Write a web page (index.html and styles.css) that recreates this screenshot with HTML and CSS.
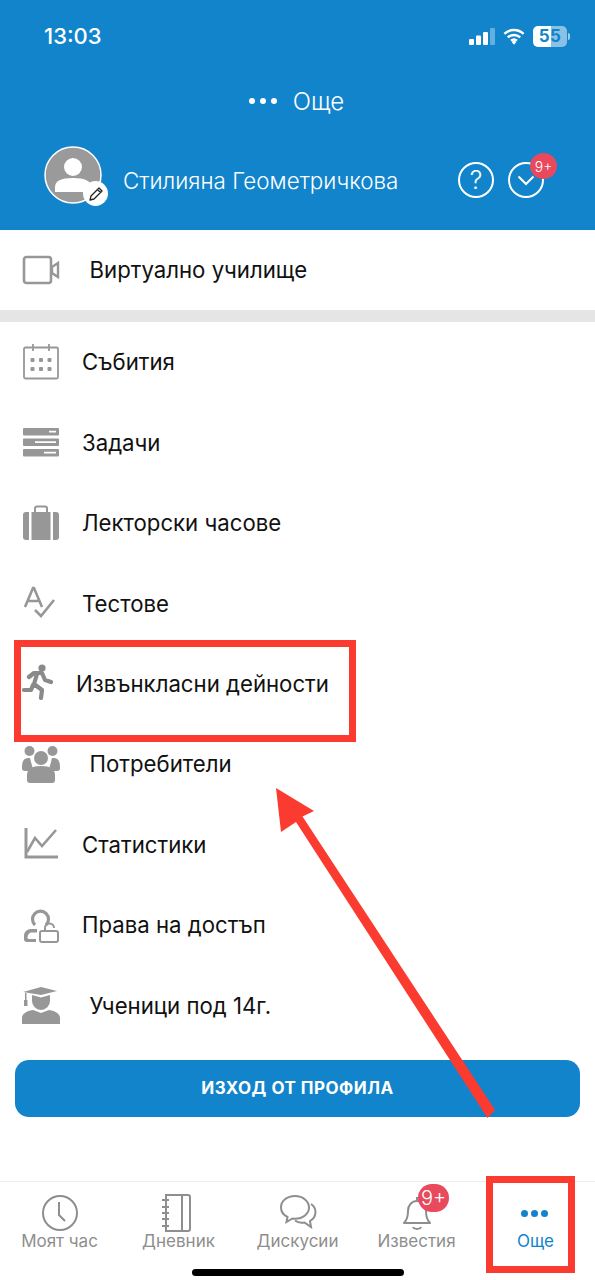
FILE: index.html
```html
<!DOCTYPE html>
<html lang="bg">
<head>
<meta charset="utf-8">
<title>Още</title>
<link rel="stylesheet" href="styles.css">
</head>
<body>
<div class="screen">
  <header class="header">
    <div class="status">
      <span class="time">13:03</span>
      <div class="status-icons">
        <svg class="signal" viewBox="0 0 26 17"><rect x="0" y="11" width="5" height="6" rx="1" fill="#fff"/><rect x="7" y="7.5" width="5" height="9.5" rx="1" fill="#fff"/><rect x="14" y="4" width="5" height="13" rx="1" fill="#fff"/><rect x="21" y="0" width="5" height="17" rx="1" fill="#fff" opacity=".35"/></svg>
        <svg class="wifi" viewBox="0 0 24 18"><path d="M1.5 6.2a15 15 0 0 1 21 0M5.2 10a10 10 0 0 1 13.6 0M8.7 13.6a5 5 0 0 1 6.6 0" fill="none" stroke="#fff" stroke-width="2.6"/><path d="M12 18l-2.6-3a3.6 3.6 0 0 1 5.2 0z" fill="#fff"/></svg>
        <div class="battery"><span class="battery-num">55</span></div>
        <span class="battery-tip"></span>
      </div>
    </div>
    <div class="title">
      <span class="title-dots"><i></i><i></i><i></i></span>
      <span class="title-text">Още</span>
    </div>
    <div class="profile">
      <div class="avatar">
        <svg class="avatar-img" viewBox="0 0 58 58"><circle cx="29" cy="29" r="28" fill="#9a9a9a" stroke="#fff" stroke-width="1.5"/><circle cx="29" cy="21" r="9" fill="#fff"/><path d="M11 46v-5c0-6 6-9 18-9s18 3 18 9v5z" fill="#fff"/></svg>
        <div class="pencil">
          <svg viewBox="0 0 16 16"><path d="M2 14l1-4 8-8 3 3-8 8z M9.5 3.5l3 3" fill="none" stroke="#222" stroke-width="1.3" stroke-linejoin="round"/></svg>
        </div>
      </div>
      <span class="name">Стилияна Геометричкова</span>
      <div class="profile-actions">
        <div class="round-icon">?</div>
        <div class="round-icon">
          <svg class="chevron" viewBox="0 0 18 11"><path d="M1.5 1.5L9 9l7.5-7.5" fill="none" stroke="#fff" stroke-width="2"/></svg>
          <span class="head-badge">9+</span>
        </div>
      </div>
    </div>
  </header>

  <main class="main">
    <div class="row row-first row-wide">
      <svg class="icon" viewBox="0 0 38 30"><rect x="2" y="2" width="27" height="26" rx="2.5" fill="none" stroke="#979797" stroke-width="2.6"/><path d="M30 12l6-4v14l-6-4z" fill="none" stroke="#979797" stroke-width="2.4"/></svg>
      <span>Виртуално училище</span>
    </div>
    <div class="band"></div>
    <div class="row">
      <svg class="icon" viewBox="0 0 38 38"><rect x="2" y="4.5" width="34" height="31" rx="1.5" fill="none" stroke="#979797" stroke-width="1.8"/><path d="M11 1v7M27 1v7" stroke="#979797" stroke-width="1.8"/><g fill="#979797"><rect x="8.500" y="15" width="4" height="4" rx="1"/><rect x="17" y="15" width="4" height="4" rx="1"/><rect x="25.500" y="15" width="4" height="4" rx="1"/><rect x="8.500" y="24" width="4" height="4" rx="1"/><rect x="17" y="24" width="4" height="4" rx="1"/><rect x="25.500" y="24" width="4" height="4" rx="1"/></g></svg>
      <span>Събития</span>
    </div>
    <div class="row">
      <svg class="icon" viewBox="0 0 38 30"><rect x="1" y="1" width="36" height="7.500" rx="1" fill="#979797"/><rect x="1" y="11.500" width="36" height="7.500" rx="1" fill="#979797"/><rect x="1" y="22" width="36" height="7.500" rx="1" fill="#979797"/><path d="M27 4.700h7M13 15.200h21M22 25.700h12" stroke="#fff" stroke-width="1.800"/></svg>
      <span>Задачи</span>
    </div>
    <div class="row">
      <svg class="icon" viewBox="0 0 38 36"><path d="M13 7V3.500a2 2 0 0 1 2-2h8a2 2 0 0 1 2 2V7" fill="none" stroke="#979797" stroke-width="2"/><path d="M4 7h3v28H4a3 3 0 0 1-3-3V10a3 3 0 0 1 3-3zM9.500 7h19v28h-19zM31 7h3a3 3 0 0 1 3 3v22a3 3 0 0 1-3 3h-3z" fill="#979797"/></svg>
      <span>Лекторски часове</span>
    </div>
    <div class="row">
      <svg class="icon" viewBox="0 0 38 34"><path d="M3 21L11 2h1l8 19M6 15h11" fill="none" stroke="#979797" stroke-width="2.6"/><path d="M13 24l6 6L32 14" fill="none" stroke="#979797" stroke-width="2.600"/></svg>
      <span>Тестове</span>
    </div>
    <div class="row row-narrow">
      <svg class="icon" viewBox="0 0 38 38"><circle cx="20" cy="4" r="3.600" fill="#8a8a8a"/><path d="M7 13l5-4h8l3 7 6 2M15 10l-3 10 8 6-1 8M11 21l-2 5H2" fill="none" stroke="#8a8a8a" stroke-width="4.200" stroke-linecap="round" stroke-linejoin="round"/></svg>
      <span>Извънкласни дейности</span>
    </div>
    <div class="row row-wide">
      <svg class="icon" viewBox="0 0 38 38"><g fill="#979797"><circle cx="7.500" cy="6" r="5"/><circle cx="30.500" cy="6" r="5"/><path d="M0 22c0-6 2-9 6-9h2l1 4 2 7v2H3a3 3 0 0 1-3-4zM38 22c0-6-2-9-6-9h-2l-1 4-2 7v2h8a3 3 0 0 0 3-4z"/><circle cx="19" cy="13" r="7"/><path d="M5 35v-5c0-6 5-9 14-9s14 3 14 9v5a3 3 0 0 1-3 3H8a3 3 0 0 1-3-3z"/></g></svg>
      <span>Потребители</span>
    </div>
    <div class="row">
      <svg class="icon" viewBox="0 0 38 34"><path d="M4 1v29h32" fill="none" stroke="#979797" stroke-width="3"/><path d="M5 25l8-14 7 8L34 3" fill="none" stroke="#979797" stroke-width="2.600"/></svg>
      <span>Статистики</span>
    </div>
    <div class="row">
      <svg class="icon" viewBox="0 0 38 38"><path d="M13 19a8 8 0 1 1 11 0" fill="none" stroke="#979797" stroke-width="3.200"/><path d="M15 23h-6c-4 0-7 3-7 7v3c0 2 1 3 3 3h9v-3H7c-1 0-1.500-.5-1.500-1.500 0-3 2-5 4-5H15z" fill="#979797"/><rect x="18" y="25" width="18" height="11" rx="2" fill="none" stroke="#979797" stroke-width="2"/><path d="M23 25v-3a4.500 4.500 0 0 1 9 0" fill="none" stroke="#979797" stroke-width="2"/></svg>
      <span>Права на достъп</span>
    </div>
    <div class="row row-wide">
      <svg class="icon" viewBox="0 0 38 38"><g fill="#979797"><path d="M1 6l18-5 16 4-16 4z"/><path d="M10 9l9 2.500L28 9v6a9 9 0 0 1-18 0z"/><rect x="3" y="7" width="1.500" height="9"/><rect x="2" y="14" width="3.500" height="6"/><path d="M0 38v-6c0-4 4-7 11-8l8 3 8-3c7 1 11 4 11 8v6z"/></g></svg>
      <span>Ученици под 14г.</span>
    </div>
    <div class="logout-wrap">
      <button class="logout">ИЗХОД ОТ ПРОФИЛА</button>
    </div>
  </main>

  <nav class="tabbar">
    <div class="tab">
      <svg class="tab-icon" viewBox="0 0 38 38"><circle cx="19" cy="19" r="17" fill="none" stroke="#8e8e8e" stroke-width="2"/><path d="M18 8v13l6 6" fill="none" stroke="#8e8e8e" stroke-width="2"/></svg>
      <span>Моят час</span>
    </div>
    <div class="tab">
      <svg class="tab-icon" viewBox="0 0 38 38"><path d="M6 1h22a2 2 0 0 1 2 2v32a2 2 0 0 1-2 2H6zM22 1v36" fill="none" stroke="#8e8e8e" stroke-width="2"/><path d="M2 6h7M2 13h7M2 19h7M2 25h7M2 32h7" stroke="#8e8e8e" stroke-width="2"/></svg>
      <span>Дневник</span>
    </div>
    <div class="tab">
      <svg class="tab-icon tab-wide" viewBox="0 0 38 38"><path d="M16 2C8 2 2 7 2 13.500c0 4 2.500 7.500 6.500 9.500l-1 5 6-3.500c1 .2 1.500.2 2.500.2 8 0 14-5 14-11.200S24 2 16 2z" fill="none" stroke="#8e8e8e" stroke-width="2"/><path d="M32 10c3 2 4.500 5 4.500 8 0 4-2 7-5.500 9l1 6-6.500-4.500c-3 .5-7 0-9.500-2" fill="none" stroke="#8e8e8e" stroke-width="2"/></svg>
      <span>Дискусии</span>
    </div>
    <div class="tab">
      <svg class="tab-icon" viewBox="0 0 38 38"><path d="M6 29c3-3 4-6 4-12 0-6 4-10 9-10s9 4 9 10c0 6 1 9 4 12z" fill="none" stroke="#8e8e8e" stroke-width="2" stroke-linejoin="round"/><path d="M15 33c1 2.500 7 2.500 8 0M19 3v4" fill="none" stroke="#8e8e8e" stroke-width="2"/></svg>
      <span>Известия</span>
      <span class="tab-badge">9+</span>
    </div>
    <div class="tab tab-active">
      <span class="tab-dots"><i></i><i></i><i></i></span>
      <span>Още</span>
    </div>
    <div class="home-bar"></div>
  </nav>

  <div class="mark mark-row"></div>
  <div class="mark mark-tab"></div>
  <svg class="arrow" viewBox="0 0 595 1280"><path d="M276 788l38 23-11.500 5.500L495 1110l-7.500 8L296 822l-15 10z" fill="#fb3a30"/></svg>
</div>
</body>
</html>
```

FILE: styles.css
```css
* { box-sizing: border-box; }
html, body { margin: 0; padding: 0; background: #fff; }
.screen {
  position: relative;
  width: 595px;
  height: 1280px;
  display: flex;
  flex-direction: column;
  overflow: hidden;
  font-family: Inter, "Liberation Sans", sans-serif;
  color: #111;
}

.header { height: 230px; background: #1284cb; color: #fff; display: flex; flex-direction: column; flex: none; }
.status { height: 72px; padding: 0 25px 0 44px; display: flex; align-items: center; justify-content: space-between; }
.time { font-size: 22px; font-weight: 500; }
.status-icons { display: flex; align-items: center; }
.signal { width: 26px; height: 17px; margin-right: 8px; }
.wifi { width: 22px; height: 17px; margin-right: 8px; }
.battery { width: 34px; height: 21px; border-radius: 5px; background: linear-gradient(90deg, #fff 0 53%, rgba(255,255,255,.5) 53% 100%); display: flex; align-items: center; justify-content: center; }
.battery-num { font-size: 17px; font-weight: 700; color: #1284cb; letter-spacing: .5px; }
.battery-tip { width: 2px; height: 7px; margin-left: 1px; background: rgba(255,255,255,.6); border-radius: 0 2px 2px 0; }

.title { height: 58px; padding-right: 2px; display: flex; align-items: center; justify-content: center; gap: 16px; font-size: 24px; font-weight: 300; }
.title-dots { display: flex; gap: 5px; }
.title-dots i { width: 6px; height: 6px; border-radius: 50%; background: #fff; }

.profile { height: 100px; padding: 0 51px 0 44px; display: flex; align-items: center; position: relative; top: -3px; }
.avatar { position: relative; width: 58px; height: 58px; flex: none; top: -2px; }
.avatar-img { width: 58px; height: 58px; display: block; }
.pencil { position: absolute; left: 39px; top: 35px; width: 25px; height: 25px; border-radius: 50%; background: #fff; display: flex; align-items: center; justify-content: center; }
.pencil svg { width: 16px; height: 16px; }
.name { margin-left: 21px; font-size: 22.4px; font-weight: 300; white-space: nowrap; flex: 1; position: relative; top: 3px; }
.profile-actions { display: flex; gap: 14px; position: relative; top: 3px; }
.round-icon { position: relative; width: 36px; height: 36px; border: 2px solid #fff; border-radius: 50%; display: flex; align-items: center; justify-content: center; font-size: 25px; font-weight: 300; }
.chevron { width: 18px; height: 11px; }
.head-badge { position: absolute; left: 20px; top: -11px; width: 27px; height: 26px; border-radius: 50%; background: #e8495c; font-size: 14px; font-weight: 300; display: flex; align-items: center; justify-content: center; }

.main { flex: 1; display: flex; flex-direction: column; }
.row { height: 80.45px; flex: none; display: flex; align-items: center; padding-left: 22px; font-size: 22.2px; }
.row-first { height: 79.500px; }
.icon { width: 38px; height: 38px; flex: none; margin-right: 22px; }
.row-wide .icon { margin-right: 29.500px; }
.row-narrow .icon { margin-right: 16px; }
.band { height: 12px; background: #e5e5e5; flex: none; }

.logout-wrap { padding: 14.400px 15px 0; }
.logout { display: block; width: 100%; height: 57px; border: 0; border-radius: 14px; background: #1284cb; color: #fff; font-family: inherit; font-size: 17px; font-weight: 700; letter-spacing: .5px; }

.tabbar { position: relative; height: 99px; flex: none; border-top: 1.5px solid #ececec; display: grid; grid-template-columns: repeat(5, 119px); }
.tab { position: relative; display: flex; flex-direction: column; align-items: center; padding-top: 12px; font-size: 17px; color: #8e8e8e; }
.tab-icon { width: 38px; height: 38px; margin-bottom: -1px; flex: none; }
.tab-badge { position: absolute; left: 61px; top: 2px; width: 31px; height: 28px; border-radius: 14px; background: #e8495c; color: #fff; font-size: 20px; font-weight: 300; display: flex; align-items: center; justify-content: center; }
.tab-active { color: #1284cb; }
.tab-dots { height: 38px; margin-bottom: -1px; display: flex; align-items: center; gap: 3px; position: relative; left: -1px; }
.tab-dots i { width: 7px; height: 7px; border-radius: 50%; background: #1284cb; }
.home-bar { position: absolute; left: 192px; top: 87px; width: 212px; height: 7px; border-radius: 4px; background: #000; }

.mark { position: absolute; border: 7px solid #fb3a30; }
.mark-row { left: 14px; top: 640px; width: 342px; height: 102px; }
.mark-tab { left: 486px; top: 1176px; width: 89px; height: 97px; }
.arrow { position: absolute; left: 0; top: 0; width: 595px; height: 1280px; pointer-events: none; }
```
